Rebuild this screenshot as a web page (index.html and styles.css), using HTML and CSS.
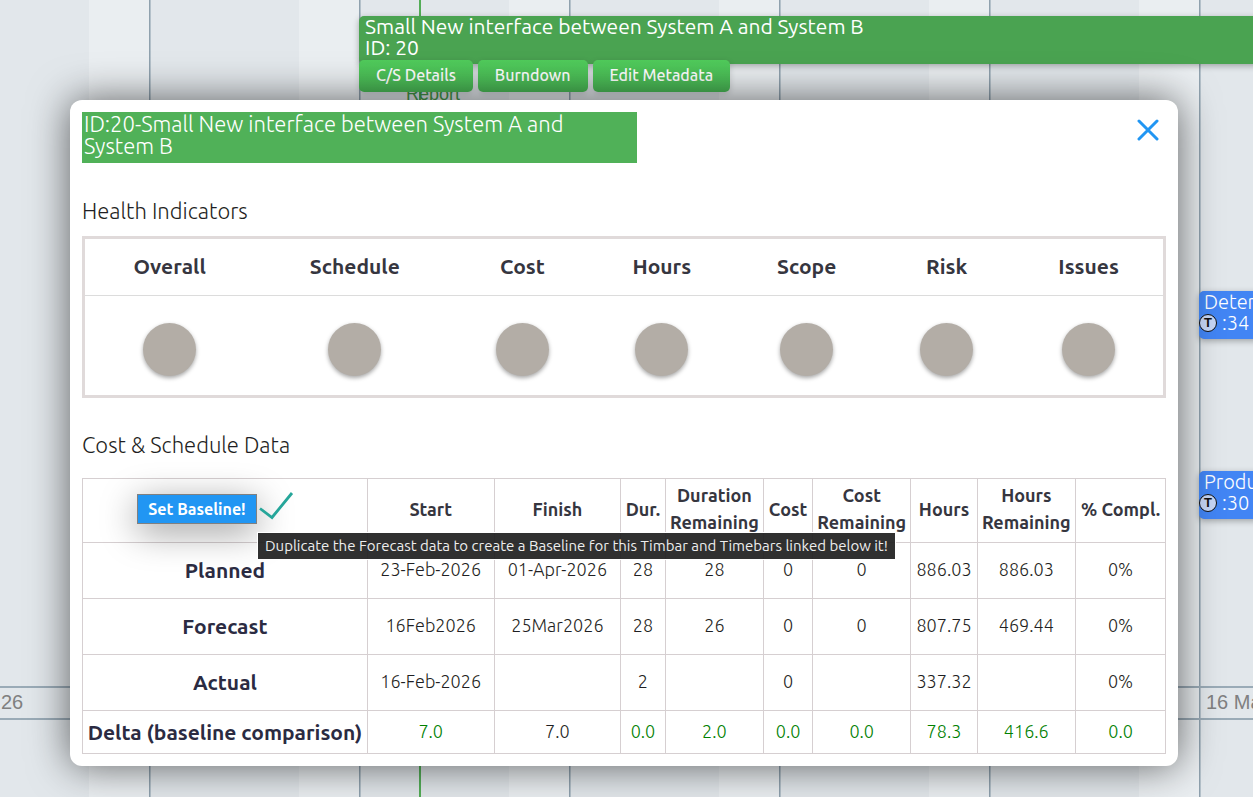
FILE: index.html
```html
<!DOCTYPE html>
<html lang="en">
<head>
    <meta charset="UTF-8">
    <meta name="viewport" content="width=device-width, initial-scale=1.0">
    <title>Cost &amp; Schedule Details</title>
    <link rel="stylesheet" href="styles.css">
</head>
<body>

    <!-- timeline behind the dialog -->
    <main class="timeline">
        <div class="current-time"></div>
        <div class="axis">
            <span class="axis-label axis-label-first">26</span>
            <span class="axis-label axis-label-last">16 Mar 2026</span>
        </div>
        <span class="report-label">Report</span>
        <div class="timebar timebar-green">Small New interface between System A and System B<br>ID: 20</div>
        <div class="timebar-actions">
            <button type="button" class="action-btn">C/S Details</button>
            <button type="button" class="action-btn">Burndown</button>
            <button type="button" class="action-btn">Edit Metadata</button>
        </div>
        <div class="timebar timebar-blue timebar-determine">Determine<br><span class="task-badge">T</span>:34</div>
        <div class="timebar timebar-blue timebar-produce">Produce<br><span class="task-badge">T</span>:30</div>
    </main>

    <section class="modal" role="dialog" aria-labelledby="modalTitle">
        <button type="button" class="close-btn" aria-label="Close">
            <svg viewBox="0 0 22 22" width="22" height="22"><path d="M2 2L20 20M20 2L2 20" fill="none" stroke="#2196f3" stroke-width="3" stroke-linecap="round"/></svg>
        </button>
        <h1 class="modal-title" id="modalTitle">ID:20-Small New interface between System A and System B</h1>

        <h2 class="section-title">Health Indicators</h2>
        <table class="health-table">
            <colgroup>
                <col class="h-overall"><col class="h-schedule"><col class="h-cost"><col class="h-hours"><col class="h-scope"><col class="h-risk"><col class="h-issues">
            </colgroup>
            <thead>
                <tr><th>Overall</th><th>Schedule</th><th>Cost</th><th>Hours</th><th>Scope</th><th>Risk</th><th>Issues</th></tr>
            </thead>
            <tbody>
                <tr>
                    <td><span class="light"></span></td>
                    <td><span class="light"></span></td>
                    <td><span class="light"></span></td>
                    <td><span class="light"></span></td>
                    <td><span class="light"></span></td>
                    <td><span class="light"></span></td>
                    <td><span class="light"></span></td>
                </tr>
            </tbody>
        </table>

        <h2 class="section-title">Cost &amp; Schedule Data</h2>
        <table class="data-table">
            <colgroup>
                <col class="c-name"><col class="c-date"><col class="c-date"><col class="c-dur"><col class="c-remaining"><col class="c-cost"><col class="c-remaining"><col class="c-hours"><col class="c-remaining"><col class="c-compl">
            </colgroup>
            <thead>
                <tr>
                    <th>
                        <div class="baseline">
                            <button type="button" class="baseline-btn" aria-describedby="baselineTip">Set Baseline!</button>
                            <svg class="check" viewBox="0 0 34 30" width="34" height="30"><path d="M1 14.5L13 23.5L33 -1" fill="none" stroke="#26a69a" stroke-width="2.8"/></svg>
                            <span class="tooltip" id="baselineTip" role="tooltip">Duplicate the Forecast data to create a Baseline for this Timbar and Timebars linked below it!</span>
                        </div>
                    </th>
                    <th>Start</th>
                    <th>Finish</th>
                    <th>Dur.</th>
                    <th>Duration Remaining</th>
                    <th>Cost</th>
                    <th>Cost Remaining</th>
                    <th>Hours</th>
                    <th>Hours Remaining</th>
                    <th>% Compl.</th>
                </tr>
            </thead>
            <tbody>
                <tr>
                    <th>Planned</th>
                    <td>23-Feb-2026</td><td>01-Apr-2026</td><td>28</td><td>28</td><td>0</td><td>0</td><td>886.03</td><td>886.03</td><td>0%</td>
                </tr>
                <tr>
                    <th>Forecast</th>
                    <td>16Feb2026</td><td>25Mar2026</td><td>28</td><td>26</td><td>0</td><td>0</td><td>807.75</td><td>469.44</td><td>0%</td>
                </tr>
                <tr>
                    <th>Actual</th>
                    <td>16-Feb-2026</td><td></td><td>2</td><td></td><td>0</td><td></td><td>337.32</td><td></td><td>0%</td>
                </tr>
                <tr class="delta">
                    <th>Delta (baseline comparison)</th>
                    <td>7.0</td><td class="neutral">7.0</td><td>0.0</td><td>2.0</td><td>0.0</td><td>0.0</td><td>78.3</td><td>416.6</td><td>0.0</td>
                </tr>
            </tbody>
        </table>
    </section>

</body>
</html>
```
FILE: styles.css
```css
* {
    box-sizing: border-box;
}

body {
    display: flow-root;
    margin: 0;
    min-height: 100vh;
    font-family: Ubuntu, "Open Sans", sans-serif;
    font-weight: 300;
    color: #1f1f23;
    position: relative;
}

button {
    font-family: inherit;
    cursor: pointer;
}

.timeline {
    position: absolute;
    inset: 0;
    overflow: hidden;
    background: repeating-linear-gradient(90deg, #8fa1ae 0 1px, #b4c1ca 1px 2px, #e2e7eb 2px 150px, #eaeef1 150px 210px) -61px 0;
    background-size: calc(100% + 61px) 100%;
}

.current-time {
    position: absolute;
    top: 0;
    bottom: 0;
    left: 419px;
    width: 2px;
    background-color: #53ad57;
}

.axis {
    position: absolute;
    left: 0;
    right: 0;
    top: 686px;
    height: 34px;
    border-top: 2px solid #9aabb7;
    border-bottom: 2px solid #9aabb7;
}

.axis-label {
    position: absolute;
    top: 2px;
    font: 20px/24px "Liberation Sans", Arial, sans-serif;
    color: #808080;
    white-space: nowrap;
}

.axis-label-first {
    left: 1px;
}

.axis-label-last {
    left: 1206px;
}

.report-label {
    position: absolute;
    left: 406px;
    top: 84px;
    font: 18px/20px "Liberation Sans", Arial, sans-serif;
    color: #46994b;
}

.timebar {
    position: absolute;
    right: -10px;
    height: 48px;
    border-radius: 5px;
    color: #fff;
    line-height: 21px;
    white-space: nowrap;
    box-shadow: 0 2px 6px rgba(0, 0, 0, 0.3);
}

.timebar-green {
    left: 359px;
    top: 16px;
    padding-left: 6px;
    background-color: #4aa351;
    font-size: 21px;
    font-weight: 400;
}

.timebar-blue {
    left: 1199px;
    padding-left: 5px;
    background-color: #4285f4;
    font-size: 20px;
}

.timebar-determine {
    top: 291px;
}

.timebar-produce {
    top: 471px;
}

.task-badge {
    display: inline-block;
    width: 18px;
    height: 18px;
    margin: 0 5px 0 -5px;
    border: 1px solid #111;
    border-radius: 50%;
    background-color: #c5d5f5;
    color: #111;
    font: bold 13px/16px "Liberation Sans", Arial, sans-serif;
    text-align: center;
    vertical-align: 3px;
}

.timebar-actions {
    position: absolute;
    left: 359px;
    top: 60px;
    display: flex;
    gap: 5px;
}

.action-btn {
    height: 32px;
    padding: 0 17px 2px;
    border: none;
    border-radius: 5px;
    background: linear-gradient(#50cb5b, #48b454);
    color: #fff;
    font-size: 16px;
    font-weight: 500;
    box-shadow: 0 2px 6px rgba(0, 0, 0, 0.15);
}

.modal {
    position: relative;
    margin: 100px 75px 31px 70px;
    padding: 12px;
    border-radius: 12px;
    background-color: #fff;
    box-shadow: 0 0 40px rgba(0, 0, 0, 0.6);
}

.close-btn {
    position: absolute;
    top: 19px;
    right: 19px;
    width: 22px;
    height: 22px;
    padding: 0;
    border: none;
    background: none;
}

.close-btn svg {
    display: block;
}

.modal-title {
    width: 555px;
    max-width: 90%;
    margin: 0 0 33px;
    padding: 1px 2px 6px;
    background-color: #50b158;
    color: #fff;
    font-size: 22px;
    font-weight: 300;
    line-height: 22px;
}

.section-title {
    margin: 32px 0 10px;
    font-size: 22px;
    font-weight: 300;
    line-height: 30px;
}

table {
    width: 100%;
    table-layout: fixed;
    border-collapse: collapse;
    text-align: center;
}

.health-table {
    border: 3px solid #e0dada;
}

.health-table th {
    height: 58px;
    padding: 0 0 2px;
    border-bottom: 1px solid #dcdcdc;
    color: #36363f;
    font-size: 21px;
    font-weight: 700;
}

.health-table td {
    height: 101px;
    padding: 8px 0 0;
}

.light {
    display: block;
    width: 53px;
    height: 53px;
    margin: 0 auto;
    border-radius: 50%;
    background-color: #b3ada6;
    box-shadow: 0 2px 4px rgba(0, 0, 0, 0.35);
}

.h-overall { width: 15.8%; }
.h-schedule { width: 18.6%; }
.h-cost { width: 12.4%; }
.h-hours { width: 13.4%; }
.h-scope { width: 13.4%; }
.h-risk { width: 12.5%; }
.h-issues { width: 13.9%; }

.data-table {
    margin-top: 18px;
}

.data-table th,
.data-table td {
    height: 56px;
    padding: 0 0 2px;
    border: 1px solid #d6cfd1;
    font-size: 18px;
    line-height: 27px;
}

.data-table thead th {
    height: 64px;
    padding-bottom: 3px;
    color: #36363f;
    font-weight: 700;
}

.data-table tbody th {
    padding: 0;
    color: #2b2b42;
    font-size: 21px;
    font-weight: 700;
}

.data-table .delta th,
.data-table .delta td {
    height: 43px;
}

.data-table .delta td {
    color: #008000;
}

.data-table .delta .neutral {
    color: #1f1f23;
}

.c-name { width: 26.3%; }
.c-date { width: 11.7%; }
.c-dur { width: 4.1%; }
.c-remaining { width: 9.1%; }
.c-cost { width: 4.5%; }
.c-hours { width: 6.1%; }
.c-compl { width: 8.3%; }

.baseline {
    position: relative;
    display: flex;
    justify-content: center;
    gap: 2px;
    padding-right: 20px;
}

.baseline-btn {
    width: 120px;
    height: 30px;
    padding: 0;
    border: 1px solid #808080;
    background-color: #2196f3;
    color: #fff;
    font-size: 16px;
    font-weight: 700;
    box-shadow: 0 8px 36px rgba(0, 0, 0, 0.4);
}

.check {
    flex: none;
    overflow: visible;
}

.tooltip {
    position: absolute;
    left: 175px;
    top: 39px;
    z-index: 1;
    padding: 0 7px;
    background-color: rgba(30, 30, 30, 0.92);
    box-shadow: 0 0 0 1px #fff;
    color: #eee;
    font-size: 15px;
    font-weight: 400;
    line-height: 26px;
    white-space: nowrap;
}
```
